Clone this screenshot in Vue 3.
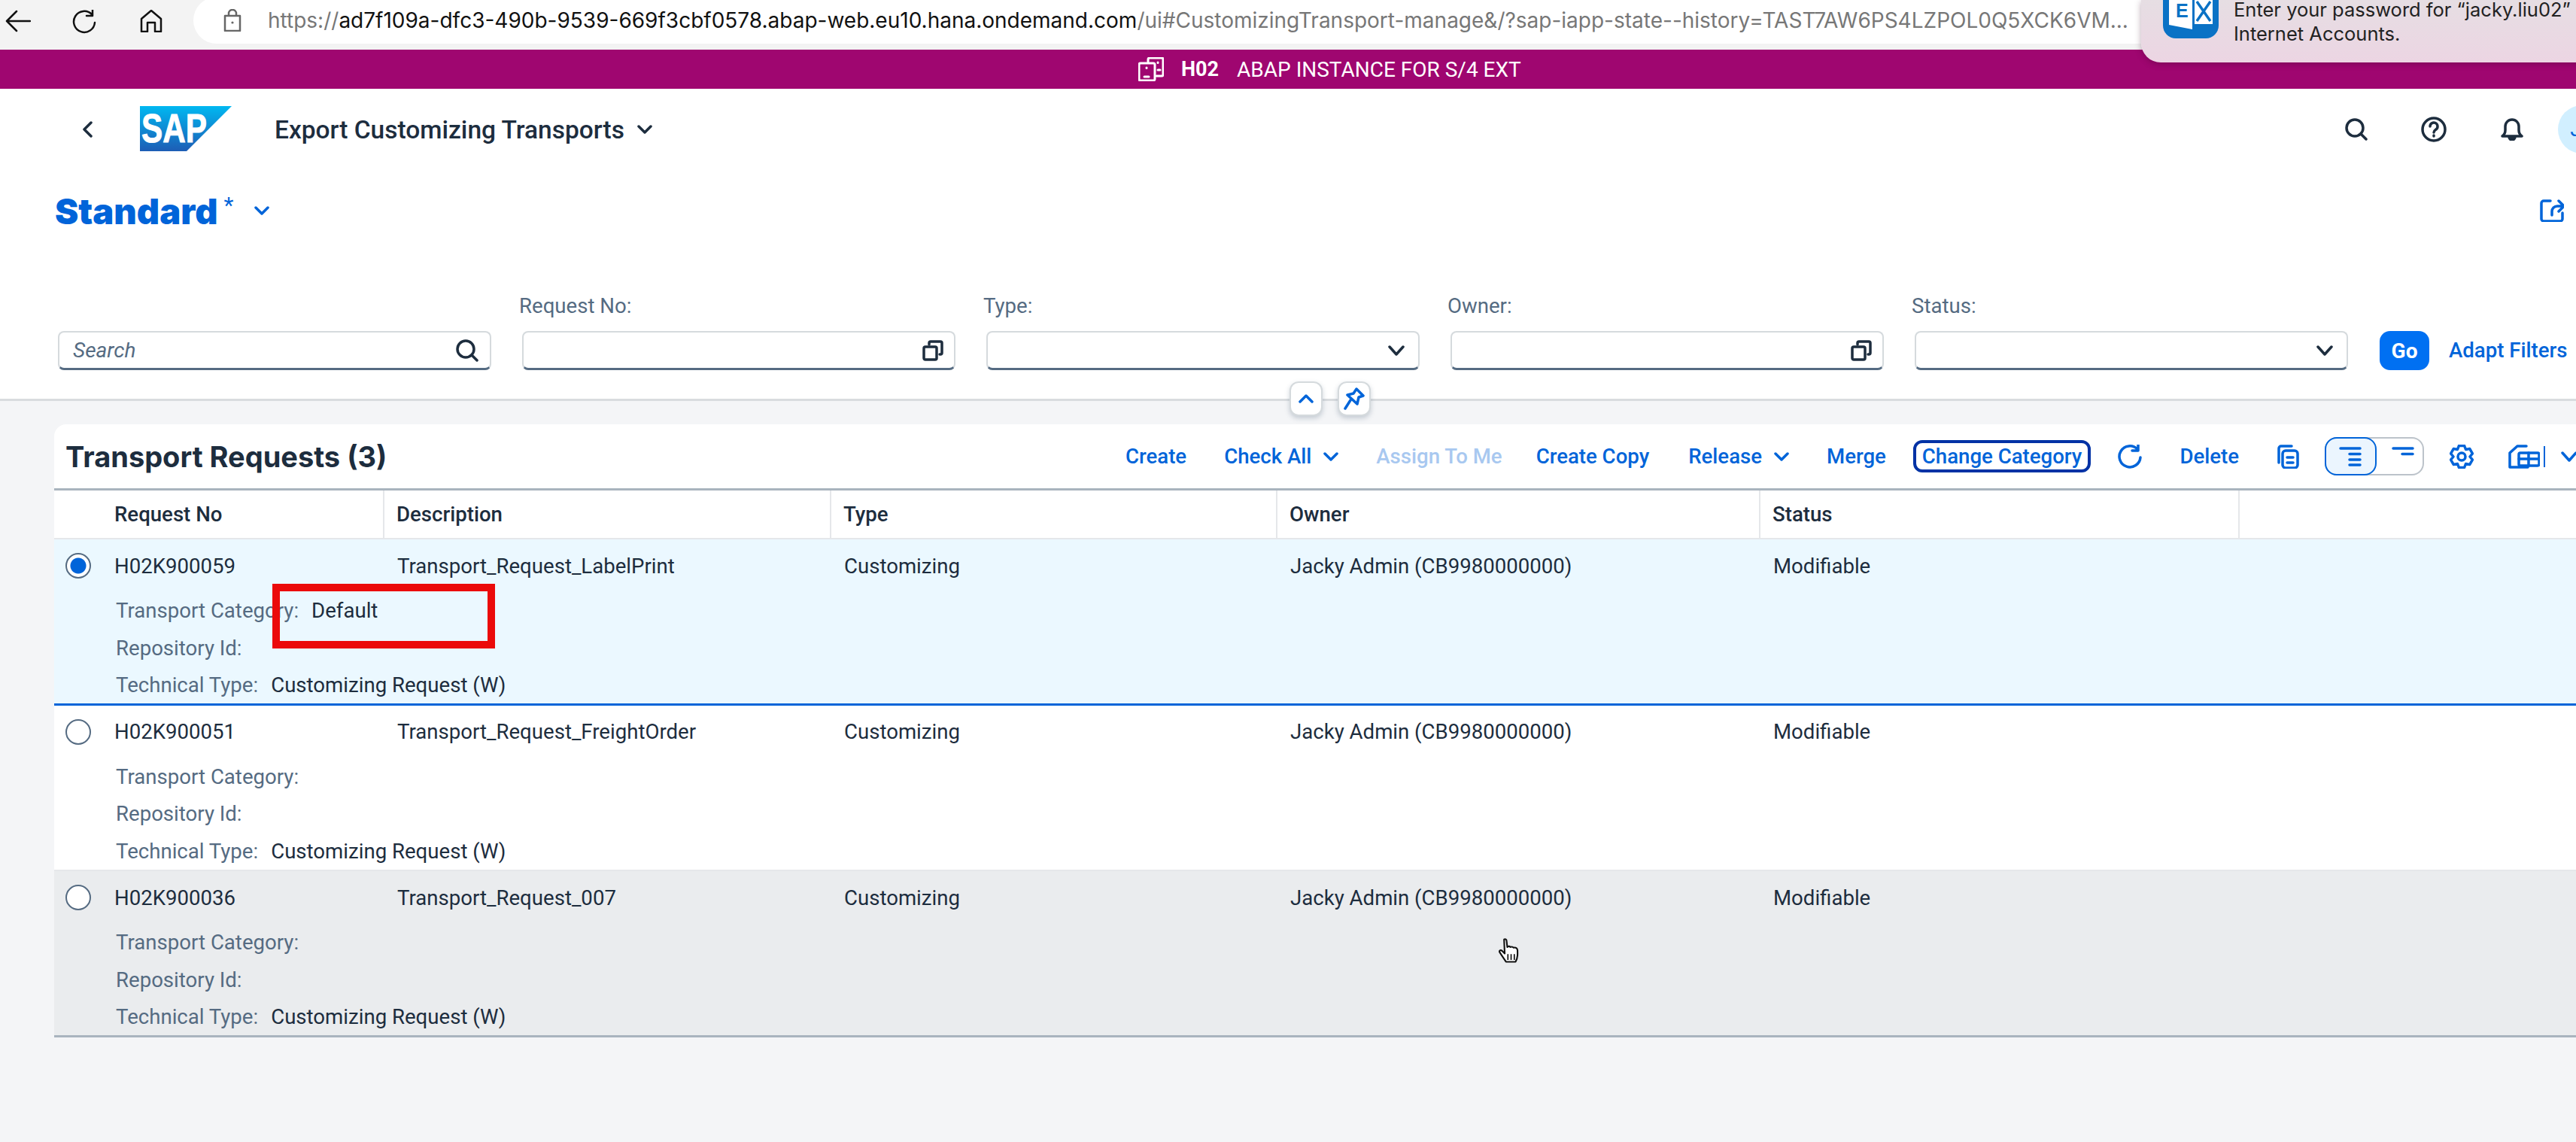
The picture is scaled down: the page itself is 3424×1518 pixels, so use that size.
<template>
  <div class="page">
    <div class="browser">
      <svg class="nav back" width="34" height="30" viewBox="0 0 34 30"><path d="M33 15H2M15 2 2 15l13 13" /></svg>
      <svg class="nav reload" width="32" height="32" viewBox="0 0 32 32"><path d="M26 6a14 14 0 1 0 4 11M27 0v8h-8" /></svg>
      <svg class="nav home" width="30" height="30" viewBox="0 0 30 30"><path d="M2 29V12L15 1l13 11v17h-8V17h-10v12z" /></svg>
      <div class="address">
        <svg class="lock" width="24" height="30" viewBox="0 0 24 30"><path d="M7 9V6a5 5 0 0 1 10 0v3M2 9h20v20H2z" /><circle cx="12" cy="18" r="1.6" /></svg>
        <span class="url"><span class="dim">https://</span>ad7f109a-dfc3-490b-9539-669f3cbf0578.abap-web.eu10.hana.ondemand.com<span class="dim">/ui#CustomizingTransport-manage&amp;/?sap-iapp-state--history=TAST7AW6PS4LZPOL0Q5XCK6VM...</span></span>
      </div>
    </div>

    <div class="notice">
      <svg class="ex-icon" width="74" height="51" viewBox="0 0 74 51">
        <rect y="-24" width="74" height="75" rx="17" fill="#0a72c5" />
        <path d="M8 -4h31v43L8 33z" fill="#fff" />
        <text x="17" y="23" class="ex-e">E</text>
        <path d="M42 -4h24v36H42z" fill="#fff" />
        <path d="M45 2l18 26M63 2 45 28" stroke="#0a72c5" stroke-width="3.500" fill="none" />
      </svg>
      <div class="notice-text">
        <div>Enter your password for “jacky.liu02”</div>
        <div>Internet Accounts.</div>
      </div>
    </div>

    <div class="sysbar">
      <svg class="sys-icon" width="34" height="32" viewBox="0 0 34 32"><path d="M13 6V3a2 2 0 0 1 2-2h16a2 2 0 0 1 2 2v20a2 2 0 0 1-2 2h-7" /><path d="M3 8h17a2 2 0 0 1 2 2v19a2 2 0 0 1-2 2H3a2 2 0 0 1-2-2V10a2 2 0 0 1 2-2zM8 26h6M11 14v.5M26 7v.5M26 17h3" /></svg>
      <b>H02</b>
      <span>ABAP INSTANCE FOR S/4 EXT</span>
    </div>

    <header class="shell">
      <svg class="dark-line back-chev" width="14" height="22" viewBox="0 0 14 22"><path d="M12 2 3 11l9 9" /></svg>
      <svg class="logo" width="122" height="60" viewBox="0 0 122 60">
        <defs><linearGradient id="sapg" x1="0" y1="0" x2="0" y2="1"><stop offset="0" stop-color="#00b8f1" /><stop offset="1" stop-color="#1d5db5" /></linearGradient></defs>
        <polygon points="0,0 122,0 62,60 0,60" fill="url(#sapg)" />
        <text x="2" y="48" class="logo-text" textLength="87" lengthAdjust="spacingAndGlyphs">SAP</text>
      </svg>
      <span class="app-title">Export Customizing Transports</span>
      <svg class="dark-line title-chev" width="20" height="12" viewBox="0 0 20 12"><path d="m2 2 8 8 8-8" /></svg>
      <div class="shell-right">
        <svg class="dark-line" width="30" height="30" viewBox="0 0 30 30"><circle cx="13" cy="13" r="11" /><path d="m21 21 7 7" /></svg>
        <svg class="dark-line" width="34" height="34" viewBox="0 0 34 34"><circle cx="17" cy="17" r="15" /><path d="M12 13a5 5 0 1 1 8 4c-2 1.500-3 2-3 4M17 25v1" /></svg>
        <svg class="dark-line bell" width="30" height="30" viewBox="0 0 30 30"><path d="M2 24c3-2 4-4 4-8V11a9 9 0 0 1 18 0v5c0 4 1 6 4 8z" /><path d="M11 25a4 4 0 0 0 8 0z" fill="#1d2d3e" /></svg>
        <div class="avatar">J</div>
      </div>
    </header>

    <div class="variant">
      <span class="variant-name">Standard</span>
      <span class="variant-star">*</span>
      <svg class="blue-line variant-chev" width="20" height="12" viewBox="0 0 20 12"><path d="m2 2 8 8 8-8" /></svg>
      <svg class="blue-line share" width="32" height="30" viewBox="0 0 32 30"><path d="M14 2H5a3 3 0 0 0-3 3v21a3 3 0 0 0 3 3h22a3 3 0 0 0 3-3v-8" /><path d="M16 21v-5a7 7 0 0 1 7-7h8M25 2l7 7-7 7" /></svg>
    </div>

    <section class="filter">
      <div v-for="f in filters" :key="f.name" class="field">
        <label v-if="f.label">{{ f.label }}</label>
        <div class="input" :class="f.kind">
          <span v-if="f.kind === 'search'" class="placeholder">Search</span>
          <svg v-if="f.kind === 'search'" class="dark-line" width="30" height="30" viewBox="0 0 30 30"><circle cx="13" cy="13" r="11" /><path d="m21 21 7 7" /></svg>
          <svg v-if="f.kind === 'help'" class="dark-line" width="28" height="28" viewBox="0 0 28 28"><rect x="2" y="9" width="17" height="17" rx="2" /><path d="M9 6V4a2 2 0 0 1 2-2h13a2 2 0 0 1 2 2v13a2 2 0 0 1-2 2h-1" /></svg>
          <svg v-if="f.kind === 'select'" class="dark-line" width="22" height="14" viewBox="0 0 22 14"><path d="m2 2 9 10 9-10" /></svg>
        </div>
      </div>
      <button class="go">Go</button>
      <a class="adapt">Adapt Filters</a>
    </section>

    <div class="collapse">
      <div class="mini">
        <svg class="blue-line" width="20" height="12" viewBox="0 0 20 12"><path d="m2 10 8-8 8 8" /></svg>
      </div>
      <div class="mini">
        <svg class="blue-line" width="28" height="30" viewBox="0 0 28 30"><path d="M17 2 26 11 20 13 18 22 5 10 13 8zM9 17 2 28" /></svg>
      </div>
    </div>

    <main class="content">
      <div class="card">
        <div class="toolbar">
          <h2>Transport Requests (3)</h2>
          <a class="act">Create</a>
          <a class="act">Check All<svg class="blue-line act-chev" width="20" height="12" viewBox="0 0 20 12"><path d="m2 2 8 8 8-8" /></svg></a>
          <a class="act off">Assign To Me</a>
          <a class="act copy">Create Copy</a>
          <a class="act">Release<svg class="blue-line act-chev" width="20" height="12" viewBox="0 0 20 12"><path d="m2 2 8 8 8-8" /></svg></a>
          <a class="act">Merge</a>
          <a class="act focused">Change Category</a>
          <a class="act">
            <svg class="blue-line" width="32" height="32" viewBox="0 0 32 32"><path d="M26 6a14 14 0 1 0 4 11M27 0v8h-8" /></svg>
          </a>
          <a class="act">Delete</a>
          <a class="act">
            <svg class="blue-line" width="30" height="32" viewBox="0 0 30 32"><path d="M3 24V5a3 3 0 0 1 3-3h14" /><rect x="8" y="8" width="20" height="23" rx="4" /><path d="M14 17h8M14 24h8" /></svg>
          </a>
          <div class="segment">
            <div class="seg on">
              <svg class="blue-line" width="30" height="26" viewBox="0 0 30 26"><path d="M2 2h26M14 9.500h14M14 17h14M14 24h14" /></svg>
            </div>
            <div class="seg">
              <svg class="blue-line off-list" width="30" height="26" viewBox="0 0 30 26"><path d="M2 2h26M14 9.500h14" /></svg>
            </div>
          </div>
          <a class="act">
            <svg class="blue-line" width="32" height="32" viewBox="0 0 32 32"><circle cx="16" cy="16" r="5" /><path d="M12.400 1.500h7.200l1.900 5 5.300-.9 3.600 6.300L27 16l3.400 4.100-3.600 6.300-5.300-.9-1.900 5h-7.200l-1.900-5-5.300.9-3.600-6.300L5 16l-3.400-4.100 3.600-6.300 5.300.9z" /></svg>
          </a>
          <a class="act export">
            <svg class="blue-line" width="42" height="32" viewBox="0 0 42 32"><path d="M24 2H12L2 11v19h24" /><rect x="14" y="11" width="27" height="17" rx="2" /><path d="M27 11v17M14 19h27" /></svg>
            <i class="bar"></i>
            <svg class="blue-line" width="22" height="14" viewBox="0 0 22 14"><path d="m2 2 9 10 9-10" /></svg>
          </a>
        </div>

        <div class="thead">
          <div v-for="c in columns" :key="c" class="th">{{ c }}</div>
          <div class="th"></div>
        </div>

        <div v-for="r in rows" :key="r.no" class="row" :class="r.state">
          <div class="main">
            <div class="td first">
              <span class="radio" :class="{ checked: r.state === 'selected' }"></span>
              {{ r.no }}
            </div>
            <div class="td">{{ r.desc }}</div>
            <div class="td">Customizing</div>
            <div class="td">Jacky Admin (CB9980000000)</div>
            <div class="td">Modifiable</div>
          </div>
          <div class="details">
            <div class="line"><span class="key">Transport Category:</span><span>{{ r.category }}</span></div>
            <div class="line"><span class="key">Repository Id:</span></div>
            <div class="line"><span class="key">Technical Type:</span><span>Customizing Request (W)</span></div>
          </div>
        </div>
      </div>
    </main>

    <div class="redbox"></div>

    <svg class="cursor" width="32" height="34" viewBox="0 0 34 40">
      <path d="M9 2c2-1 4 0 4 3l1 9c2-2 4-1 5 0 2-1 4 0 5 1 3-1 6 1 6 4 0 7 1 12-3 18H12L2 22c-1-3 2-4 4-2l4 4z" fill="#fff" stroke="#111" stroke-width="2.500" stroke-linejoin="round" />
      <path d="M15 25v9M20 25v9M25 25v9" stroke="#111" stroke-width="2" />
    </svg>
  </div>
</template>

<script setup>
const filters = [
  { name: 'search', kind: 'search' },
  { name: 'no', label: 'Request No:', kind: 'help' },
  { name: 'type', label: 'Type:', kind: 'select' },
  { name: 'owner', label: 'Owner:', kind: 'help' },
  { name: 'status', label: 'Status:', kind: 'select' }
]

const columns = ['Request No', 'Description', 'Type', 'Owner', 'Status']

const rows = [
  { no: 'H02K900059', desc: 'Transport_Request_LabelPrint', category: 'Default', state: 'selected' },
  { no: 'H02K900051', desc: 'Transport_Request_FreightOrder', category: '', state: '' },
  { no: 'H02K900036', desc: 'Transport_Request_007', category: '', state: 'hovered' }
]
</script>

<style>
html, body {
  margin: 0;
  background: #f4f5f7;
}
</style>

<style scoped>
.page {
  position: relative;
  width: 3424px;
  height: 1518px;
  overflow: hidden;
  background: #f4f5f7;
  color: #1d2d3e;
  font-family: Roboto, "Noto Sans", sans-serif;
  font-size: 27.600px;
}

svg { display: block; flex: none; }

.dark-line, .blue-line, .nav, .lock, .sys-icon { fill: none; stroke-width: 3.5; stroke-linecap: round; stroke-linejoin: round; }
.dark-line { stroke: #1d2d3e; }
.blue-line { stroke: #0064d9; }

.browser {
  display: flex;
  align-items: flex-start;
  height: 66px;
  background: #f3f3f3;
}
.nav { stroke: #111; stroke-width: 2.500; margin-top: 13px; }
.back { margin-left: 7px; }
.reload { margin-left: 55px; }
.home { margin-left: 58px; }
.address {
  display: flex;
  align-items: center;
  flex: 1;
  height: 62px;
  margin: -4px 0 0 41px;
  padding-left: 40px;
  background: #fff;
  border-radius: 32px 0 0 32px;
  white-space: nowrap;
}
.lock { stroke: #666; stroke-width: 2.500; }
.lock circle { fill: #666; stroke: none; }
.url { margin-left: 35px; font-family: Inter, sans-serif; font-size: 28px; color: #111; }
.dim { color: #777; }

.notice {
  position: absolute;
  top: 0;
  left: 2846px;
  right: -10px;
  height: 83px;
  display: flex;
  background: linear-gradient(#e6dee3, #ecd5e3);
  border-radius: 0 0 0 26px;
  box-shadow: 0 2px 8px rgba(60, 0, 40, 0.35);
}
.ex-icon { margin-left: 29px; }
.ex-e { font: bold 25px "Liberation Sans", sans-serif; fill: #0a72c5; }
.notice-text {
  margin: -3px 0 0 20px;
  font-family: Inter, sans-serif;
  font-size: 25.500px;
  line-height: 32px;
  color: #222;
  white-space: nowrap;
}

.sysbar {
  display: flex;
  align-items: center;
  height: 52px;
  padding-left: 1513px;
  background: #9f0670;
  color: #fff;
  font-size: 27px;
}
.sys-icon { stroke: #fff; stroke-width: 3; }
.sysbar b { margin-left: 23px; font-weight: 700; }
.sysbar span { margin-left: 24px; font-size: 28px; }

.shell {
  display: flex;
  align-items: center;
  height: 108px;
  background: #fff;
}
.back-chev { margin-left: 109px; }
.logo { margin-left: 63px; margin-top: -2px; }
.logo-text { font: 700 53px "Liberation Sans", sans-serif; fill: #fff; stroke: #fff; stroke-width: 1px; }
.app-title { margin-left: 57px; font-size: 33.500px; font-weight: 500; white-space: nowrap; }
.title-chev { margin-left: 17px; }
.shell-right {
  display: flex;
  align-items: center;
  margin-left: auto;
  margin-right: -40px;
}
.shell-right svg:nth-child(1) { margin-right: 71px; }
.shell-right svg:nth-child(2) { margin-right: 72px; }
.bell { margin-right: 46px; }
.avatar {
  width: 64px;
  height: 64px;
  box-sizing: border-box;
  padding-right: 16px;
  border-radius: 50%;
  background: #d1efff;
  color: #0064d9;
  text-align: center;
  line-height: 64px;
  font-size: 28px;
}

.variant {
  display: flex;
  align-items: center;
  height: 108px;
  padding: 0 16px 0 73px;
  background: #fff;
  color: #0064d9;
}
.variant-name { font-family: Inter, sans-serif; font-size: 47px; font-weight: 900; }
.variant-star { margin: -16px 0 0 8px; font-size: 30px; }
.variant-chev { margin-left: 28px; }
.share { margin-left: auto; }

.filter {
  display: grid;
  grid-template-columns: repeat(5, 576px) 67px auto;
  column-gap: 41px;
  align-items: end;
  height: 199px;
  padding: 0 0 38px 77px;
  box-sizing: border-box;
  background: #fff;
  border-bottom: 3px solid #d9dcdf;
}
.field label {
  display: block;
  margin: 0 0 16px -4px;
  line-height: 34px;
  color: #556b82;
}
.input {
  display: flex;
  align-items: center;
  justify-content: flex-end;
  height: 52px;
  padding: 0 18px;
  box-sizing: border-box;
  background: #fff;
  border: 2px solid #d5dadd;
  border-bottom: 3px solid #556b82;
  border-radius: 8px;
}
.input.help { padding-right: 14px; }
.input.search { padding-right: 15px; }
.placeholder { margin-right: auto; color: #556b82; font-style: italic; font-size: 28px; }
.go {
  height: 52px;
  margin-left: 1px;
  padding: 0;
  background: #0070f2;
  border: 0;
  border-radius: 14px;
  color: #fff;
  font: 700 28px Roboto, sans-serif;
}
.adapt { margin-left: -15px; line-height: 52px; color: #0064d9; font-weight: 500; white-space: nowrap; }

.collapse {
  position: absolute;
  top: 507px;
  left: 1714px;
  display: flex;
  gap: 20px;
}
.mini {
  display: flex;
  align-items: center;
  justify-content: center;
  width: 44px;
  height: 46px;
  background: #fff;
  border: 2px solid #d5dadd;
  box-sizing: border-box;
  border-radius: 12px;
  box-shadow: 0 3px 6px rgba(85, 107, 130, 0.3);
}

.content { padding: 31px 0 0 72px; }
.card { background: #fff; border-top-left-radius: 16px; }

.toolbar {
  display: flex;
  align-items: center;
  height: 85px;
  white-space: nowrap;
  overflow: hidden;
  border-bottom: 3px solid #a9b4be;
}
.toolbar h2 {
  flex: 0 0 1399px;
  box-sizing: border-box;
  margin: 0;
  padding-left: 15px;
  font-family: Inter, sans-serif;
  font-size: 38px;
  font-weight: 700;
}
.act {
  display: flex;
  align-items: center;
  flex: none;
  padding: 0 25px;
  color: #0064d9;
  font-weight: 500;
}
.act-chev { margin-left: 16px; }
.off { color: #a8c8f0; margin-right: -5px; }
.copy { margin-right: 2px; }
.focused {
  margin: 0 11px;
  padding: 0 8px;
  height: 43px;
  border: 4px solid #0032a5;
  border-radius: 12px;
  box-sizing: border-box;
}
.segment {
  display: flex;
  flex: none;
  width: 132px;
  height: 51px;
  margin: 0 9px;
  box-sizing: border-box;
  border: 2px solid #bcc3ca;
  border-radius: 16px;
}
.seg {
  display: flex;
  align-items: center;
  justify-content: center;
  flex: 1;
}
.seg.on {
  flex: 0 0 65px;
  margin: -2px 0 -2px -2px;
  background: #ebf5fe;
  border: 2px solid #0064d9;
  border-radius: 16px;
}
.off-list { margin-left: 10px; }
.export { margin-left: -4px; padding-right: 0; }
.bar { width: 2px; height: 28px; margin: 0 21px 0 5px; background: #0064d9; }

.thead, .main {
  display: grid;
  grid-template-columns: 439px 594px 593px 642px 637px 1fr;
}
.thead {
  height: 65px;
  border-bottom: 2px solid #e5e7ea;
  box-sizing: border-box;
}
.th {
  padding-left: 16px;
  line-height: 63px;
  font-weight: 500;
  border-right: 2px solid #e5e7ea;
}
.th:first-child { padding-left: 80px; }
.th:last-child { border-right: 0; }

.row { height: 220.600px; box-sizing: border-box; border-bottom: 2px solid #e5e7ea; background: #fff; }
.row.selected { background: #ebf8ff; border-bottom: 3px solid #0064d9; }
.row.hovered { background: #eaecee; border-bottom: 3px solid #a9b4be; }

.main { height: 70px; align-items: center; }
.td { padding-left: 17px; white-space: nowrap; }
.td.first { display: flex; align-items: center; padding-left: 15px; gap: 31px; }

.radio {
  display: block;
  width: 34px;
  height: 34px;
  box-sizing: border-box;
  border: 2px solid #556b82;
  border-radius: 50%;
  background: #fff;
}
.radio.checked { background: radial-gradient(circle, #0064d9 0 10px, #fff 11px); }

.details { padding-left: 82px; }
.line { display: flex; gap: 17px; height: 49.500px; align-items: center; white-space: nowrap; }
.key { color: #556b82; }

.redbox {
  position: absolute;
  left: 362px;
  top: 776px;
  width: 296px;
  height: 86px;
  box-sizing: border-box;
  border: 10px solid #eb0a0a;
}
.cursor { position: absolute; left: 1990px; top: 1247px; }
</style>
